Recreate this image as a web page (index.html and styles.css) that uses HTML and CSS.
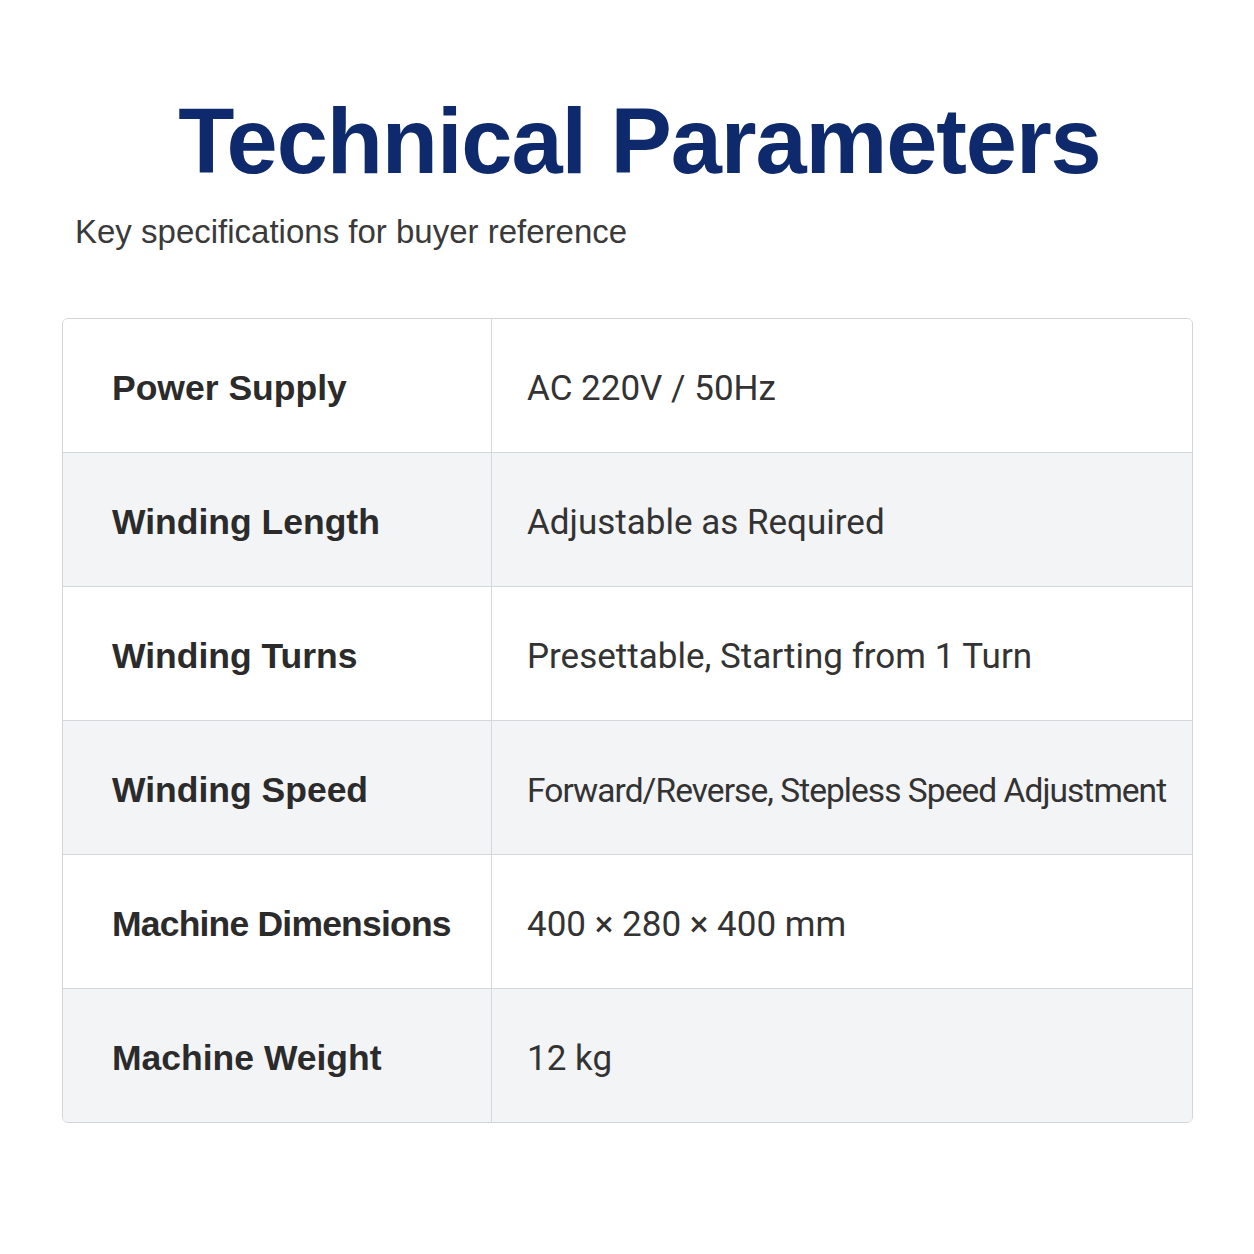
FILE: index.html
```html
<!DOCTYPE html>
<html lang="en">
<head>
<meta charset="utf-8">
<title>Technical Parameters</title>
<link rel="stylesheet" href="styles.css">
</head>
<body>
<main class="page">
  <header class="head">
    <h1 class="title">Technical Parameters</h1>
    <p class="subtitle">Key specifications for buyer reference</p>
  </header>
  <div class="specs">
    <div class="row"><div class="label">Power Supply</div><div class="value">AC 220V / 50Hz</div></div>
    <div class="row alt"><div class="label">Winding Length</div><div class="value">Adjustable as Required</div></div>
    <div class="row"><div class="label">Winding Turns</div><div class="value">Presettable, Starting from 1 Turn</div></div>
    <div class="row alt"><div class="label">Winding Speed</div><div class="value tight">Forward/Reverse, Stepless Speed Adjustment</div></div>
    <div class="row"><div class="label narrow">Machine Dimensions</div><div class="value">400 × 280 × 400 mm</div></div>
    <div class="row alt"><div class="label">Machine Weight</div><div class="value">12 kg</div></div>
  </div>
</main>
</body>
</html>
```
FILE: styles.css
```css
html, body {
  margin: 0;
  padding: 0;
  background: #ffffff;
}
.page {
  width: 1254px;
  height: 1254px;
  box-sizing: border-box;
  padding: 93px 61px 0 62px;
  font-family: "Liberation Sans", Arial, sans-serif;
}
.head {
  display: flex;
  flex-direction: column;
}
.title {
  margin: 0;
  text-align: center;
  font-size: 92px;
  line-height: 96px;
  font-weight: 700;
  letter-spacing: -1.1px;
  color: #0e2a6c;
  padding-left: 24px;
}
.subtitle {
  margin: 23px 0 0 13px;
  font-size: 33px;
  line-height: 40px;
  color: #3a3a3a;
}
.specs {
  margin-top: 66px;
  border: 1.5px solid #d3d4d8;
  border-radius: 6px;
  overflow: hidden;
}
.row {
  display: grid;
  grid-template-columns: 429px 1fr;
  height: 133px;
  border-top: 1.5px solid #d6d7db;
  background: #ffffff;
}
.row:first-child {
  border-top: none;
}
.row.alt {
  background: #f3f4f6;
}
.label, .value {
  display: flex;
  align-items: center;
  padding-top: 6px;
  white-space: nowrap;
}
.label {
  padding-left: 49px;
  border-right: 1.5px solid #d6d7db;
  font-size: 35.5px;
  font-weight: 700;
  color: #2b2b2b;
}
.label.narrow {
  letter-spacing: -0.8px;
}
.value {
  padding-left: 35px;
  font-family: Roboto, "Liberation Sans", sans-serif;
  font-size: 35px;
  color: #333333;
}
.value.tight {
  font-size: 33.5px;
  letter-spacing: -0.95px;
}
```
